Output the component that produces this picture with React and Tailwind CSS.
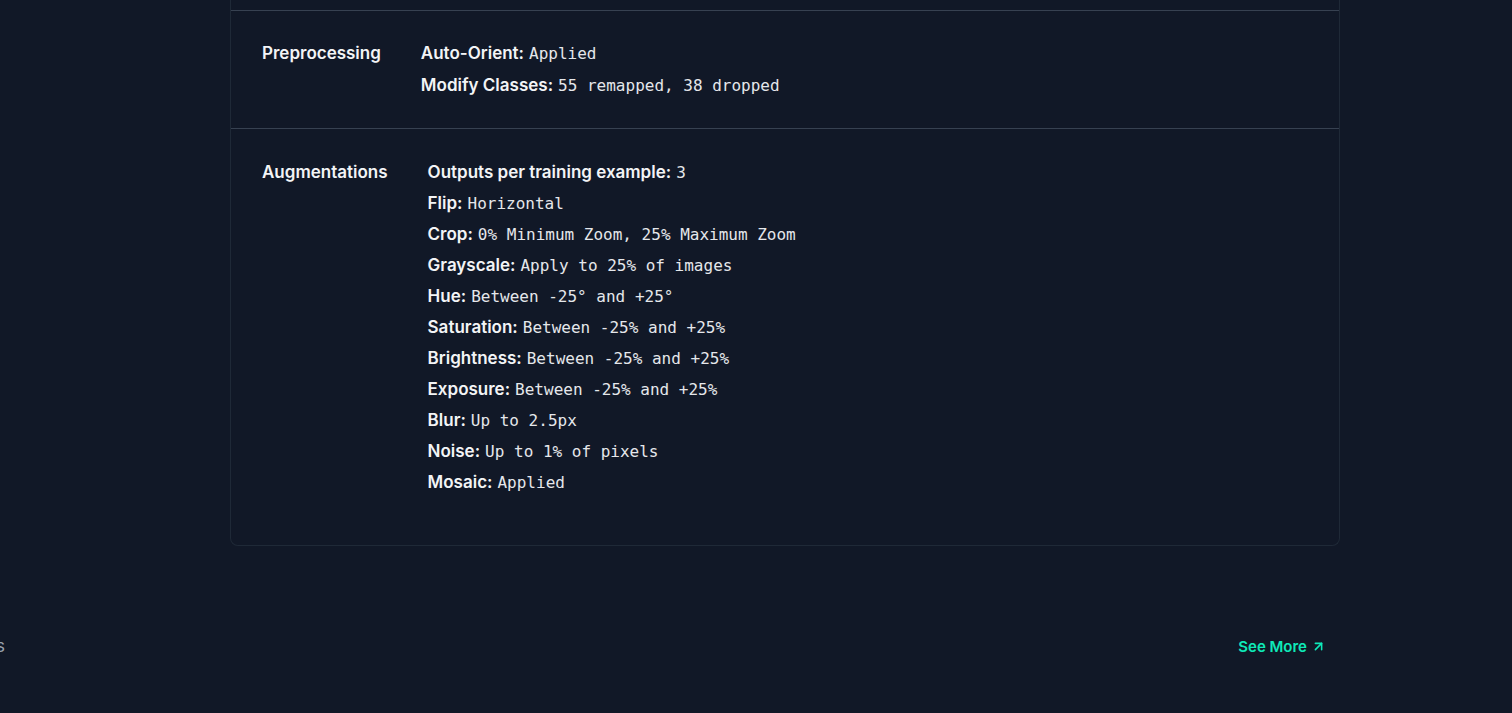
import { ArrowUpRight } from 'lucide-react'

const preprocessing = [
  ['Auto-Orient', 'Applied'],
  ['Modify Classes', '55 remapped, 38 dropped'],
]

const augmentations = [
  ['Outputs per training example', '3'],
  ['Flip', 'Horizontal'],
  ['Crop', '0% Minimum Zoom, 25% Maximum Zoom'],
  ['Grayscale', 'Apply to 25% of images'],
  ['Hue', 'Between -25° and +25°'],
  ['Saturation', 'Between -25% and +25%'],
  ['Brightness', 'Between -25% and +25%'],
  ['Exposure', 'Between -25% and +25%'],
  ['Blur', 'Up to 2.5px'],
  ['Noise', 'Up to 1% of pixels'],
  ['Mosaic', 'Applied'],
]

const sans = { fontFamily: 'Inter, "Noto Sans", sans-serif' }

function Section({ title, items, last }) {
  return (
    <div
      className={`flex gap-[40px] px-[31px] ${
        last ? 'pt-[31px] pb-[51px]' : 'pt-[30px] pb-[31px] border-b border-[#374151]'
      }`}
    >
      <div className="h-6 text-[17px] leading-6 font-semibold text-gray-100">{title}</div>
      <div className={`flex flex-col ${last ? 'gap-[7px]' : 'gap-[8px]'}`}>
        {items.map(([k, v]) => (
          <div key={k} className="h-6 flex items-baseline gap-[5px] leading-6 text-gray-100">
            <span className="text-[17px] font-semibold">{k}:</span>
            <span className="font-['DejaVu_Sans_Mono',monospace] text-[16px] text-gray-200">{v}</span>
          </div>
        ))}
      </div>
    </div>
  )
}

export default function App() {
  return (
    <div className="min-h-screen bg-[#111827] overflow-hidden" style={sans}>
      <div className="pl-[230px]">
        <div className="w-[1110px] border border-t-0 border-[#1f2937] rounded-b-lg">
          <div className="h-[11px] border-b border-[#374151]" />
          <Section title="Preprocessing" items={preprocessing} />
          <Section title="Augmentations" items={augmentations} last />
        </div>
      </div>

      {/* footer */}
      <div className="w-[1326px] mt-[88px] flex items-center justify-between">
        <span className="-ml-[4px] text-[17px] text-gray-400">s</span>
        <a href="#" className="flex items-center gap-1 text-[15px] font-semibold text-[#0ee9b9]">
          See More
          <ArrowUpRight size={15} strokeWidth={2.5} />
        </a>
      </div>
    </div>
  )
}
